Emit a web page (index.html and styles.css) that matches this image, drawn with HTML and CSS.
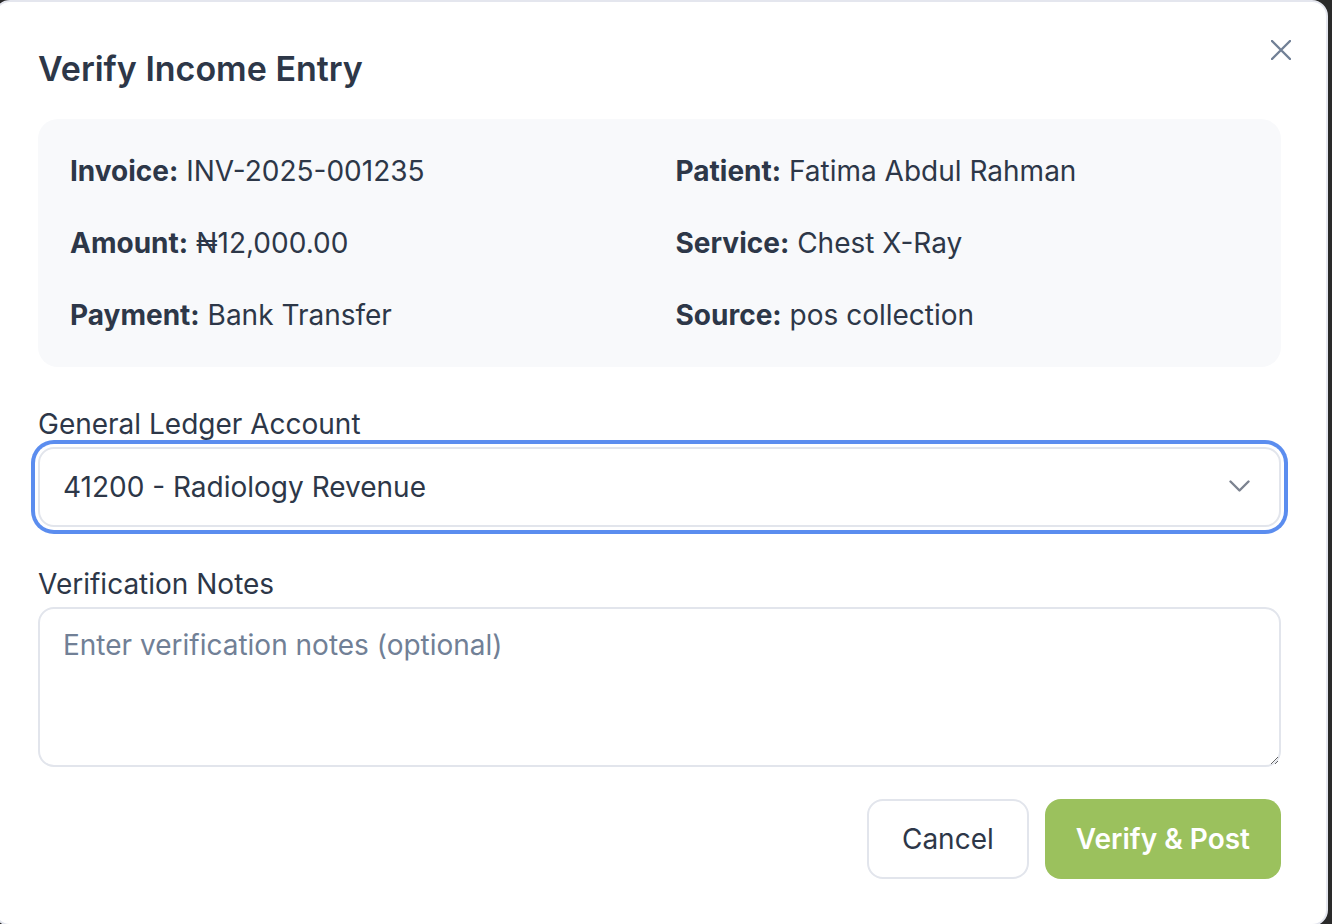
FILE: index.html
```html
<!DOCTYPE html>
<html lang="en">
<head>
<meta charset="utf-8">
<title>Verify Income Entry</title>
<link rel="stylesheet" href="styles.css">
</head>
<body>
<div class="modal">
  <div class="modal-header">
    <h2 class="modal-title">Verify Income Entry</h2>
    <button class="close-btn" type="button" aria-label="Close">
      <svg width="20" height="20" viewBox="0 0 20 20" fill="none" stroke="currentColor" stroke-width="2.4" stroke-linecap="round"><path d="M1 1L19 19M19 1L1 19"/></svg>
    </button>
  </div>

  <div class="info-box">
    <div class="info-item"><span class="k">Invoice:</span> INV-2025-001235</div>
    <div class="info-item"><span class="k">Patient:</span> Fatima Abdul Rahman</div>
    <div class="info-item"><span class="k">Amount:</span> ₦12,000.00</div>
    <div class="info-item"><span class="k">Service:</span> Chest X-Ray</div>
    <div class="info-item"><span class="k">Payment:</span> Bank Transfer</div>
    <div class="info-item"><span class="k">Source:</span> pos collection</div>
  </div>

  <label class="field-label" for="gl">General Ledger Account</label>
  <div class="select-wrap">
    <select id="gl" class="select">
      <option>41200 - Radiology Revenue</option>
    </select>
    <svg class="chevron" width="21" height="12" viewBox="0 0 21 12" fill="none" stroke="currentColor" stroke-width="2.4" stroke-linecap="round" stroke-linejoin="round"><path d="M1.5 1.5L10.5 10.5L19.5 1.5"/></svg>
  </div>

  <label class="field-label notes-label" for="notes">Verification Notes</label>
  <textarea id="notes" class="textarea" placeholder="Enter verification notes (optional)"></textarea>

  <div class="actions">
    <button class="btn btn-cancel" type="button">Cancel</button>
    <button class="btn btn-primary" type="button">Verify &amp; Post</button>
  </div>
</div>
</body>
</html>
```
FILE: styles.css
```css
* { box-sizing: border-box; }

html, body {
  margin: 0;
  height: 100%;
  overflow: hidden;
}

body {
  background: #2a2a2a;
  font-family: Inter, "Noto Sans", sans-serif;
  color: #2d3748;
}

.modal {
  width: 1334px;
  height: 926px;
  margin-left: -6px;
  background: #ffffff;
  border: 2px solid #e4e6ee;
  border-radius: 16px;
  padding: 0 45px 0 42px;
  display: flex;
  flex-direction: column;
}

.modal-header {
  display: flex;
  justify-content: space-between;
  align-items: flex-start;
  padding-top: 45px;
}

.modal-title {
  margin: 0;
  font-size: 34px;
  line-height: 44px;
  font-weight: 600;
  color: #2d3748;
}

.close-btn {
  margin: -7px -10px 0 0;
  padding: 0;
  width: 20px;
  height: 20px;
  border: 0;
  background: none;
  color: #718096;
  display: flex;
}

.info-box {
  margin-top: 28px;
  background: #f8f9fb;
  border-radius: 20px;
  padding: 34px 32px;
  display: grid;
  grid-template-columns: 1fr 1fr;
  column-gap: 32px;
  row-gap: 36px;
  font-size: 28px;
  line-height: 36px;
}

.info-item .k { font-weight: 700; }

.field-label {
  display: block;
  margin-top: 39px;
  font-size: 28px;
  line-height: 36px;
  color: #2d3748;
}

.select-wrap {
  position: relative;
  margin-top: 5px;
}

.select {
  -webkit-appearance: none;
  appearance: none;
  display: block;
  width: 100%;
  height: 80px;
  border: 2px solid #e2e5ec;
  border-radius: 16px;
  background: #fff;
  padding: 0 60px 0 23px;
  font-family: inherit;
  font-size: 28px;
  color: #2d3748;
  outline: none;
  box-shadow: 0 0 0 3px #fff, 0 0 0 7px #5b8def;
}

.chevron {
  position: absolute;
  right: 31px;
  top: 33px;
  color: #7c8390;
  pointer-events: none;
}

.notes-label { margin-top: 39px; }

.textarea {
  display: block;
  margin-top: 5px;
  width: 100%;
  height: 160px;
  border: 2px solid #e2e5ec;
  border-radius: 16px;
  padding: 18px 23px;
  font-family: inherit;
  font-size: 28px;
  line-height: 36px;
  color: #2d3748;
  outline: none;
  resize: vertical;
}

.textarea::placeholder { color: #718096; }

.actions {
  display: flex;
  justify-content: flex-end;
  gap: 16px;
  margin-top: 32px;
}

.btn {
  height: 80px;
  padding: 0 33px;
  border-radius: 16px;
  border: 2px solid transparent;
  font-family: inherit;
  font-size: 28px;
  cursor: pointer;
}

.btn-cancel {
  background: #fff;
  border-color: #e2e5ec;
  color: #2d3748;
}

.btn-primary {
  padding: 0 29px;
  background: #9bc15d;
  color: #fff;
  font-weight: 600;
}
```
